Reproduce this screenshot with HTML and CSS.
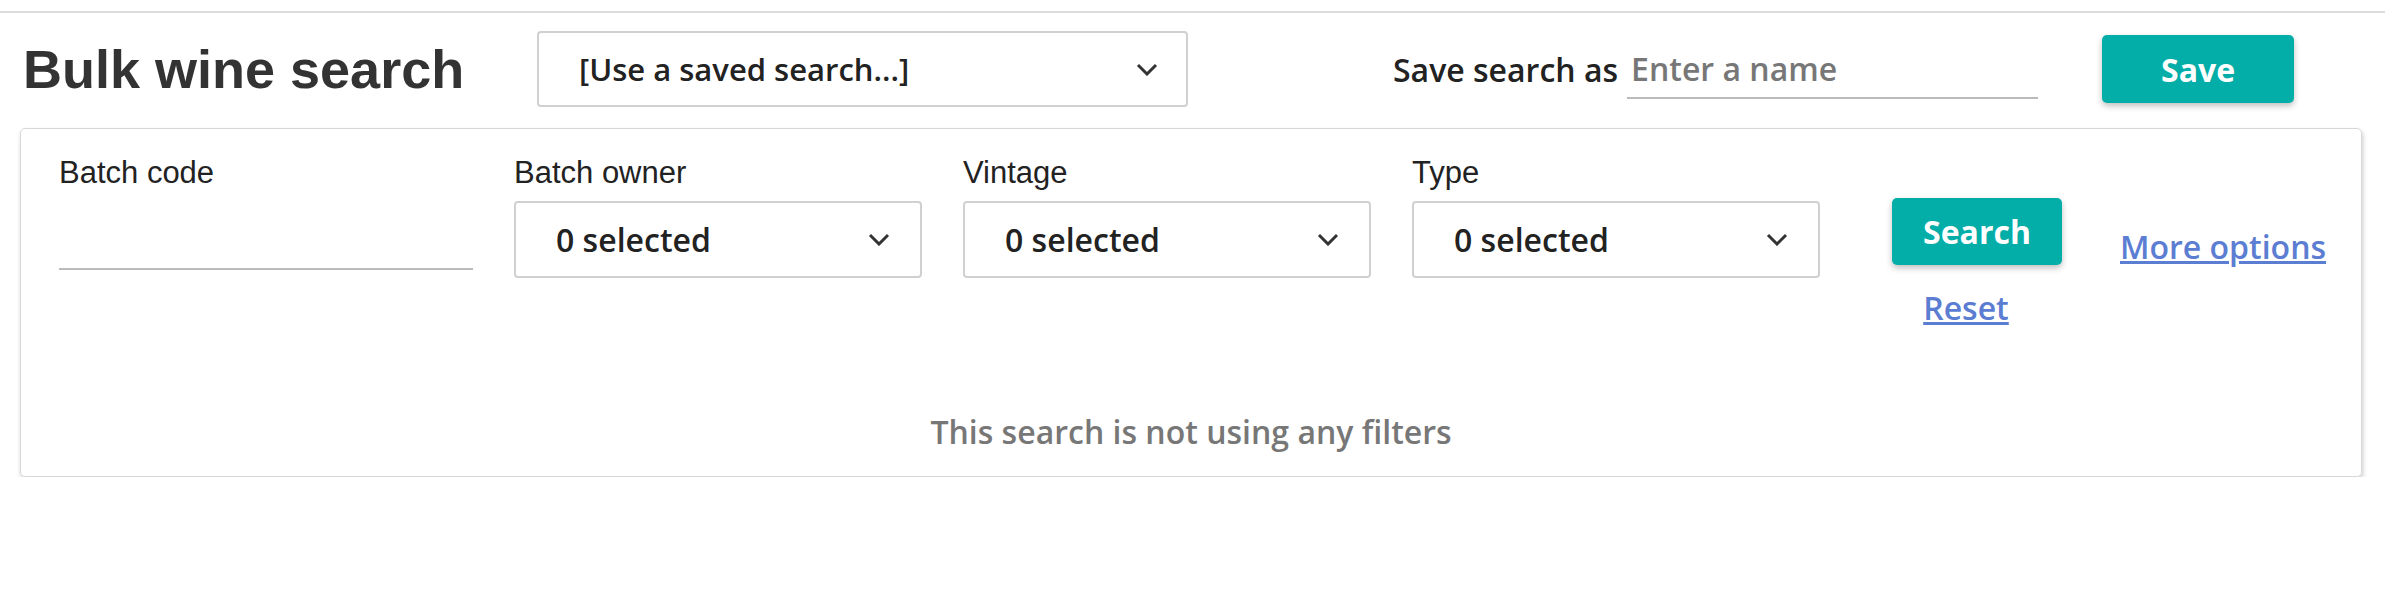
FILE: index.html
```html
<!DOCTYPE html>
<html lang="en">
<head>
  <meta charset="UTF-8">
  <title>Bulk wine search</title>
  <link rel="stylesheet" href="styles.css">
</head>
<body>
  <div class="topline"></div>

  <header class="head">
    <h1 class="title">Bulk wine search</h1>
    <div class="select select-saved">
      <span>[Use a saved search...]</span>
      <svg class="chev" viewBox="0 0 22 13"><polyline points="2,2 11,11 20,2" /></svg>
    </div>
    <div class="save-group">
      <label class="save-label" for="save-name">Save search as</label>
      <input class="save-input" id="save-name" type="text" placeholder="Enter a name">
    </div>
    <button class="btn btn-save">Save</button>
  </header>

  <section class="card">
    <div class="filters">
      <div class="field field-code">
        <div class="label">Batch code</div>
        <div class="line-input"></div>
      </div>
      <div class="field">
        <div class="label">Batch owner</div>
        <div class="select">
          <span>0 selected</span>
          <svg class="chev" viewBox="0 0 22 13"><polyline points="2,2 11,11 20,2" /></svg>
        </div>
      </div>
      <div class="field">
        <div class="label">Vintage</div>
        <div class="select">
          <span>0 selected</span>
          <svg class="chev" viewBox="0 0 22 13"><polyline points="2,2 11,11 20,2" /></svg>
        </div>
      </div>
      <div class="field">
        <div class="label">Type</div>
        <div class="select">
          <span>0 selected</span>
          <svg class="chev" viewBox="0 0 22 13"><polyline points="2,2 11,11 20,2" /></svg>
        </div>
      </div>
      <div class="actions">
        <button class="btn btn-search">Search</button>
        <a href="#" class="link reset">Reset</a>
      </div>
      <a href="#" class="link more">More options</a>
    </div>
    <p class="empty">This search is not using any filters</p>
  </section>
</body>
</html>
```

FILE: styles.css
```css
* {
  box-sizing: border-box;
}

body {
  margin: 0;
  background: #fff;
  color: #222;
  font-family: "Open Sans", sans-serif;
}

.topline {
  margin-top: 11px;
  border-top: 2px solid #dcdcdc;
}

/* header row */
.head {
  display: flex;
  align-items: center;
  margin-top: 18px;
  padding-left: 23px;
}

.title {
  flex: 0 0 514px;
  margin: 0;
  font-family: "Liberation Sans", Arial, sans-serif;
  font-size: 54px;
  font-weight: bold;
  color: #333;
}

.select {
  display: flex;
  align-items: center;
  justify-content: space-between;
  width: 408px;
  height: 77px;
  padding: 0 30px 0 40px;
  border: 2px solid #d0d0d0;
  border-radius: 4px;
  background: #fff;
  font-size: 32px;
  font-weight: 600;
  color: #222;
}

.select-saved {
  width: 651px;
  height: 76px;
  padding-right: 28px;
  font-size: 31px;
}

.chev {
  width: 22px;
  height: 13px;
}

.chev polyline {
  fill: none;
  stroke: #333;
  stroke-width: 3;
}

.save-group {
  display: flex;
  align-items: center;
  margin-left: 205px;
}

.save-label {
  font-size: 32px;
  font-weight: 600;
  color: #222;
}

.save-input {
  width: 411px;
  height: 60px;
  margin-left: 9px;
  padding: 0 4px;
  border: 0;
  border-bottom: 2px solid #bbb;
  font-family: "Open Sans", sans-serif;
  font-size: 32px;
  font-weight: 600;
  color: #222;
  outline: none;
}

.save-input::placeholder {
  color: #777;
}

.btn {
  border: 0;
  border-radius: 5px;
  background: #03ada8;
  color: #fff;
  font-family: "Open Sans", sans-serif;
  font-size: 32px;
  font-weight: 700;
  box-shadow: 0 3px 6px rgba(0, 0, 0, 0.25);
}

.btn-save {
  width: 192px;
  height: 68px;
  margin-left: 64px;
}

/* filter card */
.card {
  width: 2342px;
  margin: 21px 0 0 20px;
  padding: 26px 38px 24px 38px;
  border: 1px solid #d8d8d8;
  border-radius: 5px;
  box-shadow: 1px 3px 5px rgba(0, 0, 0, 0.2);
}

.filters {
  display: flex;
  align-items: flex-start;
}

.filters > * {
  flex-shrink: 0;
}

.field {
  margin-right: 41px;
}

.field-code {
  width: 414px;
}

.label {
  height: 36px;
  margin-bottom: 10px;
  font-family: "Liberation Sans", Arial, sans-serif;
  font-size: 31px;
  line-height: 36px;
  color: #222;
}

.line-input {
  height: 69px;
  border-bottom: 2px solid #bbb;
}

.actions {
  display: flex;
  flex-direction: column;
  align-items: center;
  width: 170px;
  margin: 43px 0 0 31px;
}

.btn-search {
  width: 170px;
  height: 67px;
}

.link {
  font-size: 32px;
  font-weight: 600;
  line-height: 40px;
  color: #5b7dd2;
  text-decoration: underline;
  white-space: nowrap;
}

.reset {
  margin: 23px 22px 0 0;
}

.more {
  margin: 72px 0 0 58px;
}

.empty {
  margin: 84px 0 0;
  text-align: center;
  font-size: 32px;
  font-weight: 600;
  line-height: 40px;
  color: #777;
}
```
